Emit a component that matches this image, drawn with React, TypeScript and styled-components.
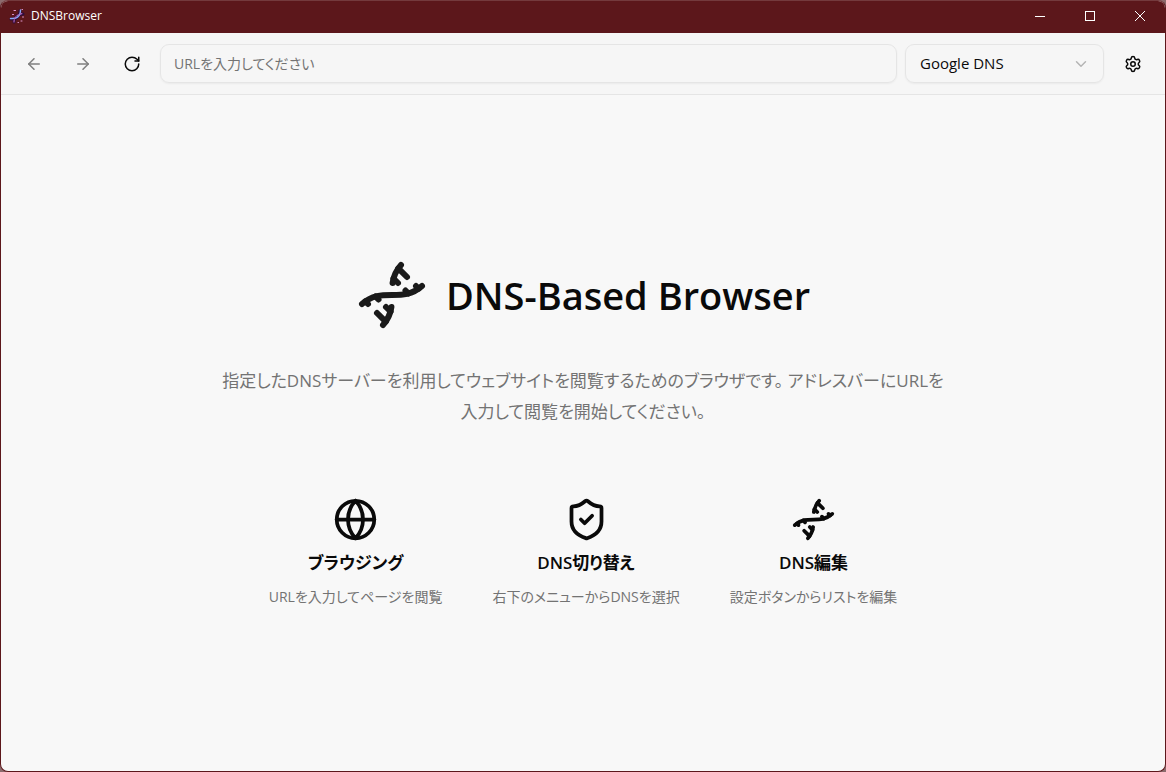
import React from 'react';
import styled, { createGlobalStyle } from 'styled-components';
import { ArrowLeft, ArrowRight, RotateCw, ChevronDown, Settings, Globe, ShieldCheck, Dna } from 'lucide-react';

const GlobalStyle = createGlobalStyle`
  *, *::before, *::after { box-sizing: border-box; }
  body {
    margin: 0;
    background: #8c6b6d;
    color: #0a0a0a;
    font-family: "Open Sans", "Noto Sans CJK JP", sans-serif;
    font-feature-settings: "palt";
  }
  button, input, select { font: inherit; font-feature-settings: inherit; color: inherit; }
  h1, h2, p { margin: 0; }
`;

const Window = styled.div`
  display: flex;
  flex-direction: column;
  min-height: 100vh;
  border: 1px solid #5c171b;
  border-top-color: #743a3d;
  border-radius: 8px;
  overflow: hidden;
  background: #f8f8f8;
`;

const TitleBar = styled.header`
  display: flex;
  align-items: center;
  height: 32px;
  padding: 0 0 2px 8px;
  background: #5c171b;
  color: #fff;
`;

const AppName = styled.span`
  flex: 1;
  margin-left: 6px;
  font-size: 12px;
  line-height: 18px;
`;

const CaptionButton = styled.button`
  display: flex;
  align-items: center;
  justify-content: center;
  width: 50px;
  height: 30px;
  padding: 0;
  border: 0;
  background: transparent;
`;

const Toolbar = styled.nav`
  display: flex;
  align-items: center;
  gap: 8px;
  height: 62px;
  padding: 0 12px;
  border-bottom: 1px solid #e5e5e5;
  background: #f6f6f6;
`;

const IconButton = styled.button`
  display: flex;
  align-items: center;
  justify-content: center;
  flex: none;
  width: 41px;
  height: 41px;
  padding: 0;
  border: 0;
  border-radius: 9px;
  background: transparent;

  &:disabled { opacity: 0.5; }
`;

const AddressInput = styled.input`
  flex: 1;
  min-width: 0;
  height: 39px;
  padding: 0 13px;
  border: 1px solid #e5e5e5;
  border-radius: 9px;
  background: transparent;
  box-shadow: 0 1px 2px rgba(0, 0, 0, 0.05);
  font-size: 14px;

  &::placeholder { color: #737373; opacity: 1; }
`;

const SelectBox = styled.div`
  display: grid;
  align-items: center;
  flex: none;
  width: 199px;

  > * { grid-area: 1 / 1; }
  > svg { justify-self: end; margin-right: 14px; pointer-events: none; }
`;

const DnsSelect = styled.select`
  appearance: none;
  width: 100%;
  height: 39px;
  padding: 0 14px 2px;
  border: 1px solid #e5e5e5;
  border-radius: 9px;
  background: transparent;
  box-shadow: 0 1px 2px rgba(0, 0, 0, 0.05);
  font-size: 15px;
`;

const Main = styled.main`
  flex: 1;
  display: flex;
  flex-direction: column;
  align-items: center;
  justify-content: center;
  padding: 36px;
  text-align: center;
`;

const Hero = styled.div`
  display: flex;
  align-items: center;
  gap: 18px;
  color: #1a1a1a;
`;

const HeroTitle = styled.h1`
  color: #0a0a0a;
  font-size: 38px;
  line-height: 48px;
  font-weight: 600;
`;

const Lead = styled.p`
  max-width: 732px;
  margin-top: 34px;
  color: #737373;
  font-size: 17px;
  line-height: 31px;
`;

const Features = styled.div`
  display: flex;
  justify-content: center;
  gap: 50px;
  margin-top: 70px;
`;

const Feature = styled.section`
  display: flex;
  flex-direction: column;
  align-items: center;
`;

const FeatureTitle = styled.h2`
  margin-top: 8px;
  font-size: 17px;
  line-height: 26px;
  font-weight: 600;
`;

const FeatureText = styled.p`
  margin-top: 9px;
  color: #737373;
  font-size: 14px;
  line-height: 23px;
`;

const features = [
  { icon: Globe, title: 'ブラウジング', text: 'URLを入力してページを閲覧' },
  { icon: ShieldCheck, title: 'DNS切り替え', text: '右下のメニューからDNSを選択' },
  { icon: Dna, title: 'DNS編集', text: '設定ボタンからリストを編集' },
];

function AppLogo() {
  return (
    <svg width="16" height="16" viewBox="0 0 16 16" fill="none" strokeLinecap="round" aria-hidden="true">
      <path d="M2 11C6 11 10 11 11 3M5 14C5 9 9 6 14 6" stroke="#2e0d3c" strokeWidth="3" />
      <path d="M1.500 10.500C7 11 11.500 9 11.500 2" stroke="#86a9f5" strokeWidth="1.400" />
      <path d="M5 14C5 9 9 6 14 5.500" stroke="#b464b4" strokeWidth="1.200" strokeDasharray="2 1.500" />
      <path d="M5 2.500h1.500M13 1.500h.5M13.500 9h1M3.500 6.500h1M9 14.500h.5M12 13h1" stroke="#df9ad2" />
    </svg>
  );
}

export default function App() {
  return (
    <>
      <GlobalStyle />
      <Window>
        <TitleBar>
          <AppLogo />
          <AppName>DNSBrowser</AppName>
          <CaptionButton aria-label="最小化">
            <svg width="10" height="10" stroke="#fff"><path d="M0 5.500h10" /></svg>
          </CaptionButton>
          <CaptionButton aria-label="最大化">
            <svg width="10" height="10" fill="none" stroke="#fff"><rect x=".5" y=".5" width="9" height="9" /></svg>
          </CaptionButton>
          <CaptionButton aria-label="閉じる">
            <svg width="10" height="10" stroke="#fff"><path d="M0 0l10 10M10 0L0 10" /></svg>
          </CaptionButton>
        </TitleBar>
        <Toolbar>
          <IconButton aria-label="戻る" disabled><ArrowLeft size={18} /></IconButton>
          <IconButton aria-label="進む" disabled><ArrowRight size={18} /></IconButton>
          <IconButton aria-label="再読み込み"><RotateCw size={18} /></IconButton>
          <AddressInput type="text" aria-label="URL" placeholder="URLを入力してください" />
          <SelectBox>
            <DnsSelect aria-label="DNS" defaultValue="google">
              <option value="google">Google DNS</option>
            </DnsSelect>
            <ChevronDown size={18} color="#b5b5b5" />
          </SelectBox>
          <IconButton aria-label="設定"><Settings size={18} /></IconButton>
        </Toolbar>
        <Main>
          <Hero>
            <Dna size={72} />
            <HeroTitle>DNS-Based Browser</HeroTitle>
          </Hero>
          <Lead>
            指定したDNSサーバーを利用してウェブサイトを閲覧するためのブラウザです。 アドレスバーにURLを入力して閲覧を開始してください。
          </Lead>
          <Features>
            {features.map(({ icon: Icon, title, text }) => (
              <Feature key={title}>
                <Icon size={45} />
                <FeatureTitle>{title}</FeatureTitle>
                <FeatureText>{text}</FeatureText>
              </Feature>
            ))}
          </Features>
        </Main>
      </Window>
    </>
  );
}
